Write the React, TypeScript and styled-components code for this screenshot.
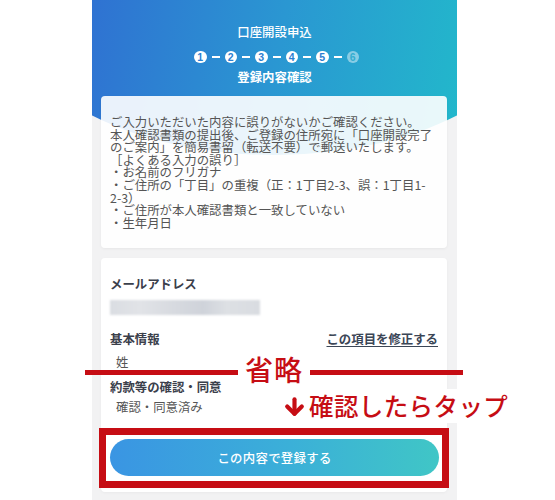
import React from 'react'
import styled, { createGlobalStyle } from 'styled-components'
import { ArrowDown } from 'lucide-react'

const GlobalStyle = createGlobalStyle`
  html, body {
    margin: 0;
    padding: 0;
    background: #fff;
  }
  body {
    font-family: "Noto Sans CJK JP", "Noto Sans", sans-serif;
    -webkit-font-smoothing: antialiased;
  }
  * {
    box-sizing: border-box;
  }
`

const RED = '#c60d14'

const Page = styled.div`
  position: relative;
  width: 555px;
  height: 500px;
  overflow: hidden;
  background: #fff;
`

const Phone = styled.div`
  margin-left: 92px;
  width: 365px;
  height: 500px;
  background: #f2f2f3;
`

const Header = styled.header`
  height: 155px;
  padding-top: 24px;
  background: linear-gradient(100deg, #2f72d2 0%, #2a97d2 50%, #22b8cb 100%);
  clip-path: ellipse(75% 100% at 50% 0);
  color: #fff;
  text-align: center;
  .title {
    font-size: 12.4px;
    line-height: 16px;
    font-weight: 500;
  }
  .subtitle {
    margin-top: 5px;
    font-size: 12.4px;
    line-height: 16px;
    font-weight: 700;
  }
`

const Steps = styled.ol`
  list-style: none;
  margin: 10px 0 0;
  padding: 0 0 0 4px;
  display: flex;
  justify-content: center;
  align-items: center;
  height: 14px;
  gap: 5px;
`

const StepDot = styled.li<{ $done: boolean }>`
  width: 12.5px;
  height: 12.5px;
  border-radius: 50%;
  background: ${(p) => (p.$done ? '#fff' : 'rgba(255,255,255,0.45)')};
  color: ${(p) => (p.$done ? '#2b7fd2' : '#33aed0')};
  font-family: "Liberation Sans", Arial, sans-serif;
  font-size: 10.5px;
  font-weight: 700;
  line-height: 12.5px;
  text-align: center;
`

const StepDash = styled.li`
  width: 8px;
  height: 1.6px;
  background: #fff;
`

const Content = styled.main`
  position: relative;
  z-index: 1;
  margin-top: -59px;
  padding: 0 10px 0 9px;
  display: flex;
  flex-direction: column;
  gap: 10px;
`

const NoticeCard = styled.section`
  background: rgba(255, 255, 255, 0.9);
  border-radius: 4px;
  box-shadow: 0 1px 3px rgba(0, 0, 0, 0.05);
  padding: 20px 10px 19px 9px;
  color: #555;
  font-size: 12.4px;
  line-height: 12.6px;
  .line {
    white-space: nowrap;
  }
`

const InfoCard = styled.section`
  background: #fff;
  border-radius: 4px;
  box-shadow: 0 1px 3px rgba(0, 0, 0, 0.04);
  padding: 18px 9px 4px 9px;
`

const Row = styled.div<{ $gap: number }>`
  margin-top: ${(p) => p.$gap}px;
  display: flex;
  justify-content: space-between;
  align-items: center;
  height: 16px;
`

const Label = styled.div`
  font-size: 12.4px;
  line-height: 16px;
  font-weight: 700;
  color: #3b404b;
`

const EditLink = styled.a`
  font-size: 12.4px;
  line-height: 16px;
  font-weight: 700;
  color: #3b4656;
  text-decoration: underline;
  text-underline-offset: 2px;
`

const Value = styled.div<{ $gap: number }>`
  margin-top: ${(p) => p.$gap}px;
  padding-left: 6px;
  font-size: 12.4px;
  line-height: 16px;
  color: #555;
`

const BlurredValue = styled.div`
  margin-top: 8px;
  width: 150px;
  height: 15px;
  background: linear-gradient(
    90deg,
    #dadde2 0%,
    #e1e3e7 20%,
    #d6d9df 45%,
    #cfd3da 62%,
    #dde0e4 78%,
    #d9dce1 100%
  );
  filter: blur(0.8px);
`

const TapFrame = styled.div`
  margin: 13px -11px 0 -11px;
  border: 7px solid ${RED};
  background: #fff;
  padding: 4px 3px 5px 4px;
`

const SubmitButton = styled.button`
  display: block;
  width: 100%;
  height: 37px;
  border: none;
  border-radius: 19px;
  background: linear-gradient(90deg, #3a95e3 0%, #3bb0d8 55%, #40c6c6 100%);
  color: #fff;
  font-family: inherit;
  font-size: 12.4px;
  font-weight: 500;
  letter-spacing: 0.3px;
`

const OmitMark = styled.div`
  position: absolute;
  z-index: 2;
  left: 85px;
  top: 352px;
  width: 378px;
  display: flex;
  align-items: center;
  gap: 7px;
  .rule {
    flex: 1;
    height: 5.5px;
    margin-top: 7px;
    background: ${RED};
  }
  .word {
    color: ${RED};
    font-size: 28px;
    line-height: 34px;
    font-weight: 500;
    letter-spacing: 1px;
  }
`

const TapHint = styled.div`
  position: absolute;
  z-index: 2;
  left: 279px;
  top: 389px;
  display: flex;
  align-items: center;
  gap: 2px;
  padding: 0 6px 0 3px;
  background: #fff;
  color: ${RED};
  font-size: 24.5px;
  line-height: 34px;
  font-weight: 500;
  letter-spacing: 0.4px;
`

const notice = [
  'ご入力いただいた内容に誤りがないかご確認ください。',
  '本人確認書類の提出後、ご登録の住所宛に「口座開設完了',
  'のご案内」を簡易書留（転送不要）で郵送いたします。',
  '［よくある入力の誤り］',
  '・お名前のフリガナ',
  '・ご住所の「丁目」の重複（正：1丁目2-3、誤：1丁目1-',
  '2-3）',
  '・ご住所が本人確認書類と一致していない',
  '・生年月日',
]

const App = () => {
  const steps = [1, 2, 3, 4, 5, 6]
  return (
    <Page>
      <GlobalStyle />
      <Phone>
        <Header>
          <div className="title">口座開設申込</div>
          <Steps>
            {steps.map((n, i) => (
              <React.Fragment key={n}>
                {i > 0 && <StepDash />}
                <StepDot $done={n < 6}>{n}</StepDot>
              </React.Fragment>
            ))}
          </Steps>
          <div className="subtitle">登録内容確認</div>
        </Header>
        <Content>
          <NoticeCard>
            {notice.map((line, i) => (
              <div className="line" key={i}>
                {line}
              </div>
            ))}
          </NoticeCard>
          <InfoCard>
            <Row $gap={0}>
              <Label>メールアドレス</Label>
            </Row>
            <BlurredValue />
            <Row $gap={16}>
              <Label>基本情報</Label>
              <EditLink>この項目を修正する</EditLink>
            </Row>
            <Value $gap={7}>姓</Value>
            <Row $gap={9}>
              <Label>約款等の確認・同意</Label>
            </Row>
            <Value $gap={4}>確認・同意済み</Value>
            <TapFrame>
              <SubmitButton>この内容で登録する</SubmitButton>
            </TapFrame>
          </InfoCard>
        </Content>
      </Phone>
      <OmitMark>
        <span className="rule" />
        <span className="word">省略</span>
        <span className="rule" />
      </OmitMark>
      <TapHint>
        <ArrowDown size={25} strokeWidth={4} />
        <span>確認したらタップ</span>
      </TapHint>
    </Page>
  )
}

export default App
